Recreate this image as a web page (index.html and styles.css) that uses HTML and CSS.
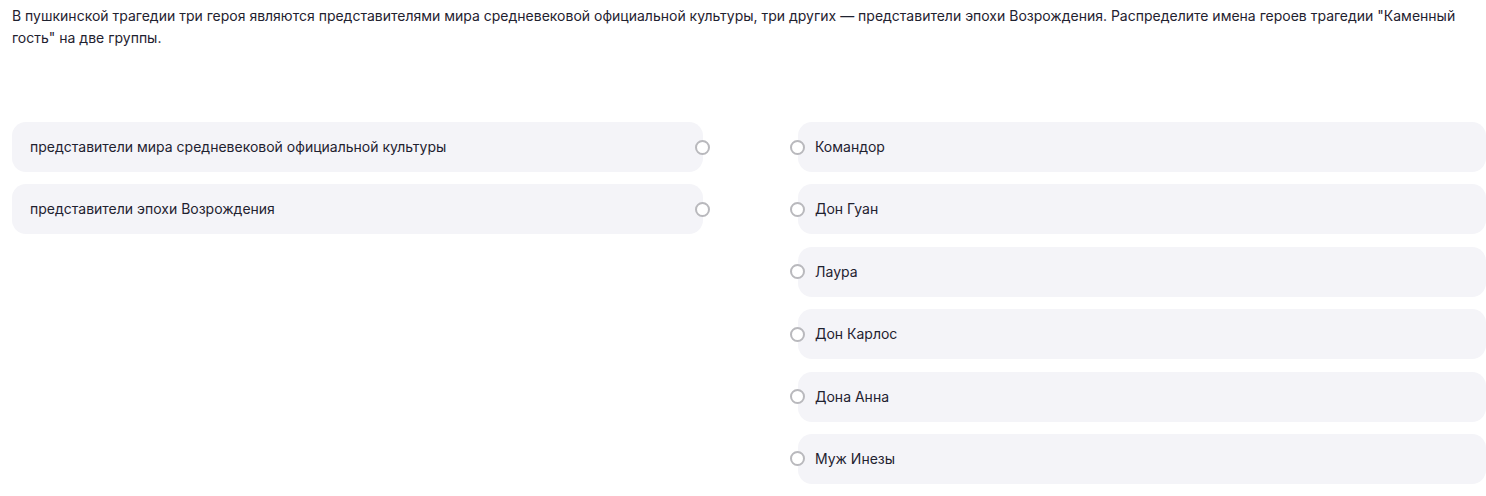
FILE: index.html
```html
<!DOCTYPE html>
<html lang="ru">
<head>
<meta charset="utf-8">
<link rel="stylesheet" href="styles.css">
</head>
<body>
<div class="page">
  <p class="question">В пушкинской трагедии три героя являются представителями мира средневековой официальной культуры, три других — представители эпохи Возрождения. Распределите имена героев трагедии "Каменный гость" на две группы.</p>
  <div class="match">
    <div class="col left">
      <div class="card"><span class="label">представители мира средневековой официальной культуры</span><span class="dot dot-right"></span></div>
      <div class="card"><span class="label">представители эпохи Возрождения</span><span class="dot dot-right"></span></div>
    </div>
    <div class="col right">
      <div class="card"><span class="dot dot-left"></span><span class="label">Командор</span></div>
      <div class="card"><span class="dot dot-left"></span><span class="label">Дон Гуан</span></div>
      <div class="card"><span class="dot dot-left"></span><span class="label">Лаура</span></div>
      <div class="card"><span class="dot dot-left"></span><span class="label">Дон Карлос</span></div>
      <div class="card"><span class="dot dot-left"></span><span class="label">Дона Анна</span></div>
      <div class="card"><span class="dot dot-left"></span><span class="label">Муж Инезы</span></div>
    </div>
  </div>
</div>
</body>
</html>
```
FILE: styles.css
```css
* { box-sizing: border-box; }
html, body { margin: 0; padding: 0; background: #fff; }
body {
  font-family: Inter, "Noto Sans", sans-serif;
  color: #1f2230;
  font-size: 14px;
}
.page { padding: 5px 0 0 12px; }
.question {
  margin: 0;
  line-height: 22px;
  width: 1470px;
}
.match {
  display: grid;
  grid-template-columns: 691px 688px;
  column-gap: 95px;
  margin-top: 73px;
  align-items: start;
}
.col { display: flex; flex-direction: column; }
.left { gap: 12px; }
.right { gap: 12.4px; }
.card {
  position: relative;
  height: 50px;
  background: #f4f4f8;
  border-radius: 14px;
  display: flex;
  align-items: center;
}
.left .card { padding-left: 18px; }
.right .card { padding-left: 17px; }
.label { line-height: 20px; }
.dot {
  position: absolute;
  top: 50%;
  width: 15px;
  height: 15px;
  margin-top: -7.5px;
  border-radius: 50%;
  border: 2px solid #b9b9bd;
  background: #fff;
}
.dot-right { right: -7px; }
.dot-left { left: -8px; }
```
